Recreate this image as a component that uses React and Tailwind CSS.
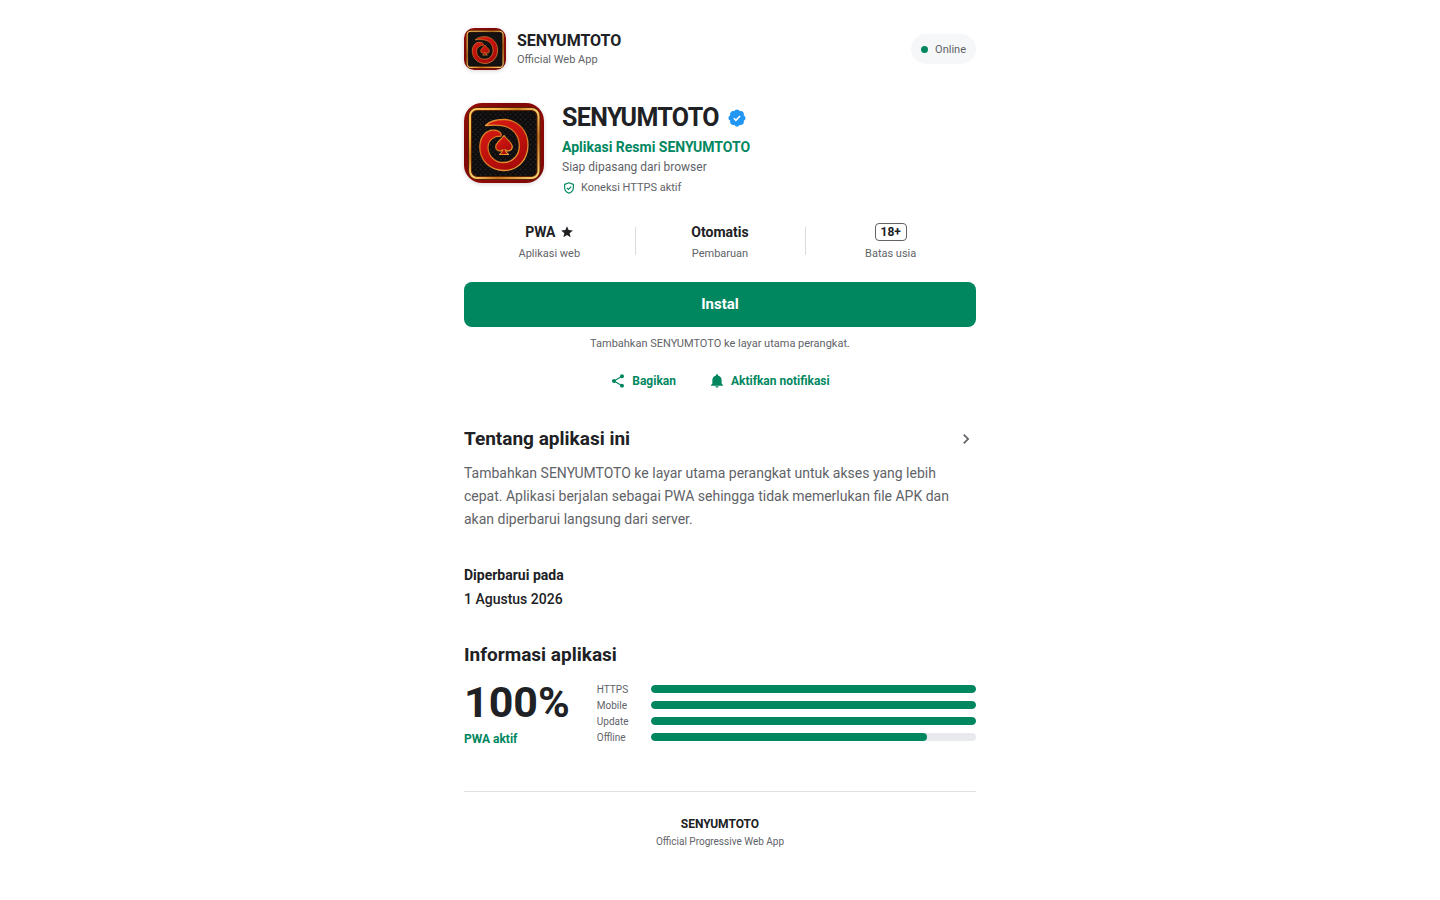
import React, { useId } from "react";
import { MdStar, MdShare, MdChevronRight } from "react-icons/md";

function AppLogo({ className }) {
  const id = useId().replace(/[^a-zA-Z0-9]/g, "");
  return (
    <svg viewBox="0 0 80 80" className={className} role="img" aria-label="SENYUMTOTO">
      <defs>
        <linearGradient id={`frame${id}`} x1="0" y1="0" x2="1" y2="1">
          <stop offset="0" stopColor="#98100b" />
          <stop offset="0.3" stopColor="#7d0806" />
          <stop offset="0.6" stopColor="#8e0a08" />
          <stop offset="1" stopColor="#7c0706" />
        </linearGradient>
        <linearGradient id={`gold${id}`} x1="0" y1="0" x2="1" y2="1">
          <stop offset="0" stopColor="#ffc95c" />
          <stop offset="0.2" stopColor="#f3b548" />
          <stop offset="0.35" stopColor="#c87f22" />
          <stop offset="0.5" stopColor="#ffd570" />
          <stop offset="0.7" stopColor="#c4761c" />
          <stop offset="1" stopColor="#ffd978" />
        </linearGradient>
        <linearGradient id={`edge${id}`} x1="0" y1="0" x2="0.7" y2="1">
          <stop offset="0" stopColor="#f0a33a" />
          <stop offset="0.5" stopColor="#d26a1c" />
          <stop offset="1" stopColor="#eda03a" />
        </linearGradient>
        <linearGradient id={`red${id}`} x1="0" y1="0" x2="0.6" y2="1">
          <stop offset="0" stopColor="#d91d13" />
          <stop offset="0.5" stopColor="#c5130e" />
          <stop offset="1" stopColor="#a80b09" />
        </linearGradient>
        <pattern id={`dots${id}`} width="5" height="5" patternUnits="userSpaceOnUse">
          <rect width="5" height="5" fill="#0e0c0c" />
          <circle cx="1.5" cy="1.5" r="1" fill="#242020" />
          <circle cx="4" cy="4" r="1" fill="#1c1919" />
        </pattern>
      </defs>
      <rect width="80" height="80" fill={`url(#frame${id})`} />
      <rect x="6" y="6" width="68.5" height="69" rx="7" fill={`url(#dots${id})`} stroke="#5c2206" strokeWidth="4" />
      <rect x="6" y="6" width="68.5" height="69" rx="7" fill="none" stroke={`url(#gold${id})`} strokeWidth="2" />
      <path
        d="M21.500 22.500C26 18 33 16.300 41 16.500C54.500 17.500 64 28 64 42C64 57 53.500 67.500 40 67.500C26 67.500 15.800 57.500 15.800 44C15.800 33.500 22 27 30 27.200C35 27.300 38.500 30.500 36.700 33.300C35.500 34 33.500 32.500 31 34C26 36.500 23.800 40.500 24 45C24.500 53.500 31 59.500 39.500 59.500C49 59.500 55.500 52 55.300 42.500C55 31.500 48 24.500 39 22.800C32.500 21.700 27 22 21.500 22.500Z"
        fill={`url(#red${id})`}
        stroke={`url(#edge${id})`}
        strokeWidth="1.3"
        strokeLinejoin="round"
      />
      <path
        d="M40 32.500C42.500 36.500 48.300 39.500 48.300 43.800C48.300 48 43.500 49 41 46.500C41.300 48.500 42.500 50 44.500 51.500H35.500C37.500 50 38.700 48.500 39 46.500C36.500 49 31.700 48 31.700 43.800C31.700 39.500 37.500 36.500 40 32.500Z"
        fill={`url(#red${id})`}
        stroke={`url(#edge${id})`}
        strokeWidth="1.2"
        strokeLinejoin="round"
      />
    </svg>
  );
}

function VerifiedBadge({ className }) {
  return (
    <svg viewBox="0 0 24 24" className={className} role="img" aria-label="Terverifikasi">
      <path
        fill="#2196f3"
        d="M22.250 12c0-1.430-.880-2.670-2.190-3.340.460-1.390.200-2.900-.810-3.910s-2.520-1.270-3.910-.810c-.660-1.310-1.910-2.190-3.340-2.190s-2.670.880-3.330 2.190c-1.400-.460-2.910-.200-3.920.810s-1.260 2.520-.800 3.910c-1.310.670-2.200 1.910-2.200 3.340s.890 2.670 2.200 3.340c-.460 1.390-.210 2.900.800 3.910s2.520 1.260 3.910.810c.670 1.310 1.910 2.190 3.340 2.190s2.680-.880 3.340-2.190c1.390.450 2.900.200 3.910-.810s1.270-2.520.810-3.910c1.310-.670 2.190-1.910 2.190-3.340z"
      />
      <path d="M8.200 12.300l2.500 2.500 5-5.200" fill="none" stroke="#fff" strokeWidth="1.900" />
    </svg>
  );
}

function ShieldIcon({ className }) {
  return (
    <svg viewBox="0 0 24 24" className={className} fill="none" stroke="currentColor" strokeWidth="2" aria-hidden="true">
      <path d="M12 3l7.500 2.800v5.400c0 4.600-3 8.200-7.500 9.800-4.500-1.600-7.500-5.200-7.500-9.800V5.800z" strokeLinejoin="round" />
      <path d="M8.500 11.800l2.500 2.500 4.700-4.700" />
    </svg>
  );
}

function BellIcon({ className }) {
  return (
    <svg viewBox="0 0 24 24" className={className} fill="currentColor" aria-hidden="true">
      <path d="M12 22a2.500 2.500 0 0 0 2.450-2h-4.900A2.500 2.500 0 0 0 12 22zm7-6v-5.200c0-3.300-2-5.900-5.200-6.700v-.6a1.800 1.800 0 0 0-3.600 0v.6C7 4.900 5 7.500 5 10.800V16l-2 2v1h18v-1z" />
    </svg>
  );
}

const metrics = [
  { label: "HTTPS", value: 100 },
  { label: "Mobile", value: 100 },
  { label: "Update", value: 100 },
  { label: "Offline", value: 85 },
];

function Header() {
  return (
    <header className="flex items-center justify-between">
      <div className="flex items-center gap-[11px]">
        <AppLogo className="size-[42px] rounded-[10px] shadow-[0_1px_4px_rgba(0,0,0,0.16)]" />
        <div>
          <p className="text-base leading-[22px] font-bold">SENYUMTOTO</p>
          <p className="text-[11px] leading-4 text-[#5f6368]">Official Web App</p>
        </div>
      </div>
      <div className="flex h-[30px] items-center gap-[7px] rounded-full bg-[#f6f7f9] px-[10px] text-[11px] leading-[17px] text-[#5f6368]">
        <span className="size-[7px] rounded-full bg-[#01875f]" />
        Online
      </div>
    </header>
  );
}

function Hero() {
  return (
    <section className="mt-[33px] flex items-start gap-[18px]">
      <AppLogo className="size-20 shrink-0 rounded-[18px] shadow-[0_1px_4px_rgba(0,0,0,0.16)]" />
      <div className="min-w-0">
        <h1 className="flex items-center gap-2 text-[25px] leading-[30px] font-bold tracking-tight">
          SENYUMTOTO
          <VerifiedBadge className="size-5" />
        </h1>
        <p className="mt-1 text-sm leading-5 font-bold text-[#01875f]">Aplikasi Resmi SENYUMTOTO</p>
        <p className="text-xs leading-5 text-[#5f6368]">Siap dipasang dari browser</p>
        <p className="flex items-center gap-[5px] text-[11px] leading-[22px] text-[#5f6368]">
          <ShieldIcon className="size-[14px] text-[#01875f]" />
          Koneksi HTTPS aktif
        </p>
      </div>
    </section>
  );
}

function Stat({ label, divider, children }) {
  return (
    <div className="relative flex flex-col items-center">
      <div className="flex h-5 items-center gap-1 text-sm font-bold">{children}</div>
      <p className="mt-[3px] text-[11px] leading-[18px] text-[#5f6368]">{label}</p>
      {divider && <span className="absolute top-[5px] -right-px h-7 w-px bg-[#dadce0]" />}
    </div>
  );
}

export default function App() {
  return (
    <main className="mx-auto max-w-[552px] bg-white px-5 pt-7 pb-12 font-['Roboto',sans-serif] text-[#202124]">
      <Header />
      <Hero />

      <section className="mt-[23px] grid grid-cols-3">
        <Stat label="Aplikasi web" divider>
          PWA
          <MdStar className="size-[14px]" />
        </Stat>
        <Stat label="Pembaruan" divider>
          Otomatis
        </Stat>
        <Stat label="Batas usia">
          <span className="flex h-[18px] items-center rounded-[4px] border border-[#5f6368] px-[5px] text-xs">18+</span>
        </Stat>
      </section>

      <button
        type="button"
        className="mt-[19px] h-[45px] w-full cursor-pointer rounded-lg bg-[#01875f] text-[15px] font-bold text-white"
      >
        Instal
      </button>
      <p className="mt-2 text-center text-[11px] leading-[18px] text-[#5f6368]">
        Tambahkan SENYUMTOTO ke layar utama perangkat.
      </p>

      <div className="mt-[10px] flex justify-center gap-[33px] text-xs font-bold text-[#01875f]">
        <button type="button" className="flex h-9 cursor-pointer items-center gap-[6px]">
          <MdShare className="size-4" />
          Bagikan
        </button>
        <button type="button" className="flex h-9 cursor-pointer items-center gap-[6px]">
          <BellIcon className="size-4" />
          Aktifkan notifikasi
        </button>
      </div>

      <section className="mt-7">
        <div className="flex items-center justify-between">
          <h2 className="text-[19px] leading-6 font-bold">Tentang aplikasi ini</h2>
          <button type="button" aria-label="Selengkapnya" className="cursor-pointer text-[#5f6368]">
            <MdChevronRight className="size-5" />
          </button>
        </div>
        <p className="mt-[11px] text-sm leading-[23px] text-[#5f6368]">
          Tambahkan SENYUMTOTO ke layar utama perangkat untuk akses yang lebih cepat. Aplikasi berjalan sebagai PWA
          sehingga tidak memerlukan file APK dan akan diperbarui langsung dari server.
        </p>
      </section>

      <section className="mt-8 text-sm leading-6">
        <h3 className="font-bold">Diperbarui pada</h3>
        <p className="font-medium">1 Agustus 2026</p>
      </section>

      <section className="mt-8">
        <h2 className="text-[19px] leading-6 font-bold">Informasi aplikasi</h2>
        <div className="mt-[14px] flex items-start gap-[27px]">
          <div>
            <p className="text-[43px] leading-[42px] font-bold">100%</p>
            <p className="mt-2 text-xs leading-4 font-bold text-[#01875f]">PWA aktif</p>
          </div>
          <ul className="flex-1">
            {metrics.map((m) => (
              <li key={m.label} className="flex h-4 items-center">
                <span className="w-[54px] text-[10px] text-[#5f6368]">{m.label}</span>
                <div className="h-2 flex-1 overflow-hidden rounded-full bg-[#e8eaed]">
                  <div className="h-full rounded-full bg-[#01875f]" style={{ width: `${m.value}%` }} />
                </div>
              </li>
            ))}
          </ul>
        </div>
      </section>

      <footer className="mt-11 border-t border-[#e0e0e0] pt-6 text-center">
        <p className="text-xs leading-4 font-bold">SENYUMTOTO</p>
        <p className="mt-[2px] text-[10px] leading-4 text-[#5f6368]">Official Progressive Web App</p>
      </footer>
    </main>
  );
}
